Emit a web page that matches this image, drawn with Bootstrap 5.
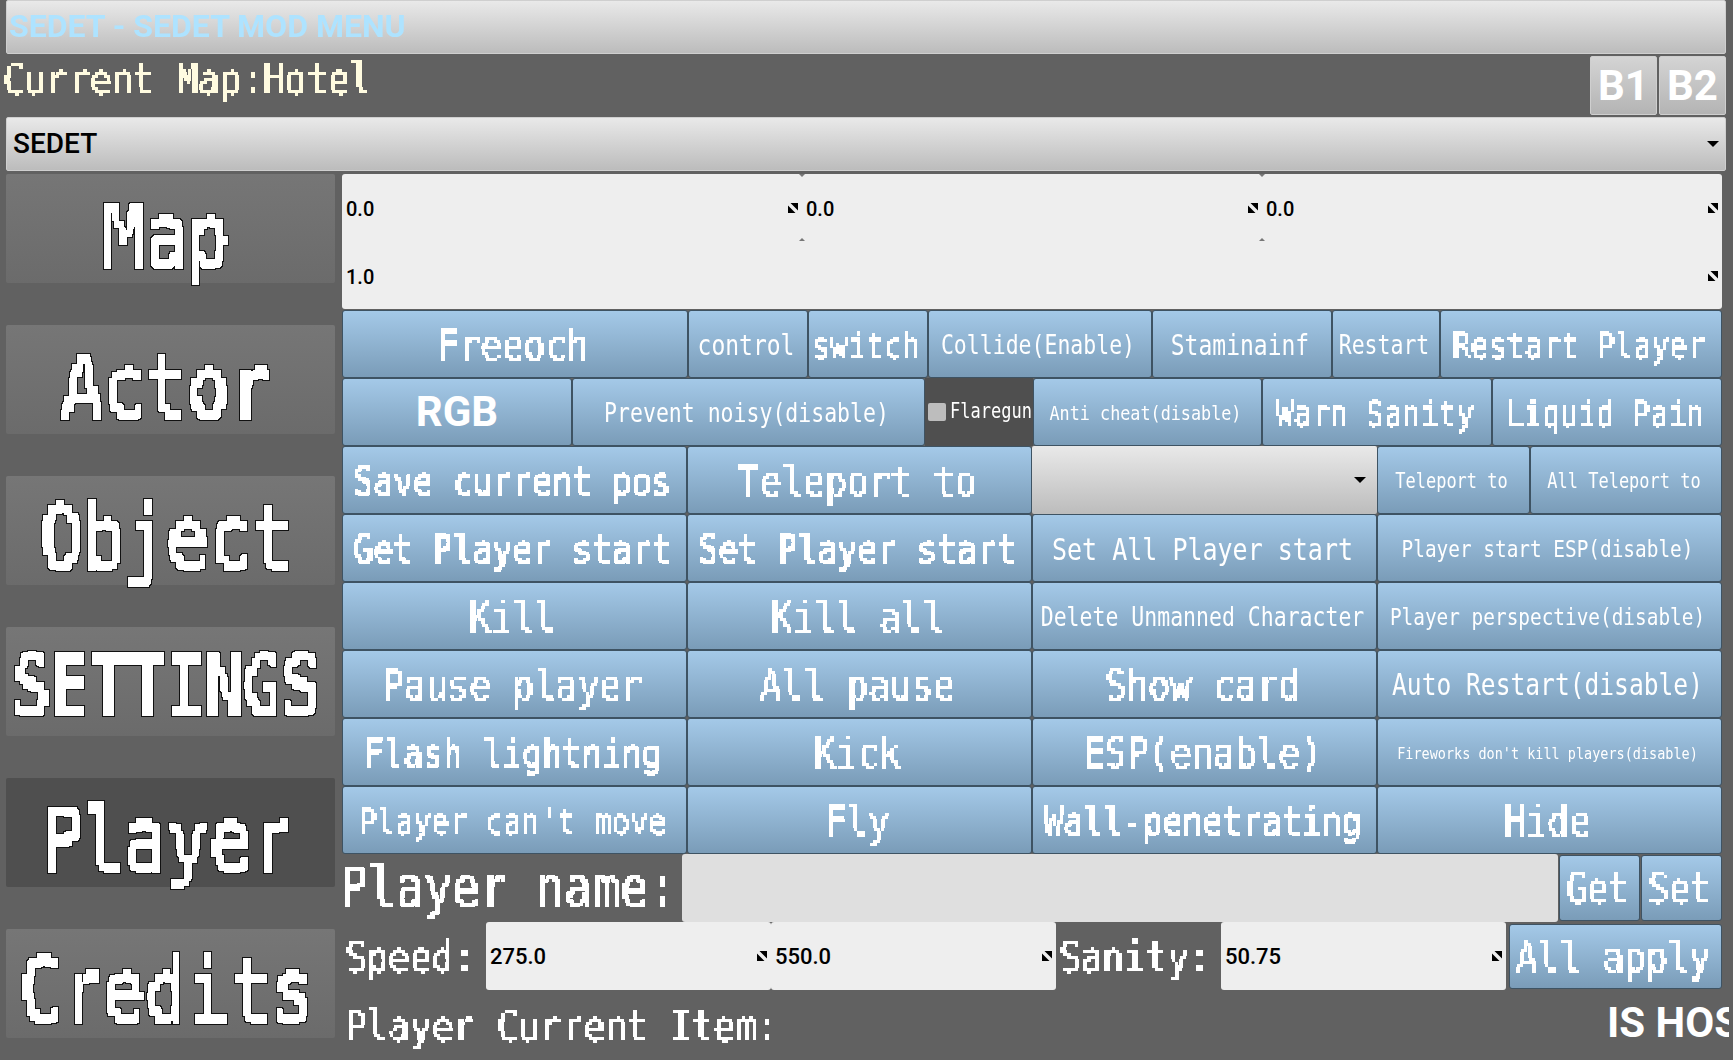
<!DOCTYPE html>
<html lang="en">
<head>
<meta charset="utf-8">
<title>SEDET MOD MENU</title>
<link href="https://cdn.jsdelivr.net/npm/bootstrap@5.3.0/dist/css/bootstrap.min.css" rel="stylesheet">
<style>
html,body{height:1060px;overflow:hidden}
body{background:#616161;color:#fff;font-family:Roboto,"Liberation Sans",sans-serif}
.shell{width:1733px;height:1060px;overflow:hidden;padding:0 7px 0 6px}
.metal{background:linear-gradient(#e9e9e9,#bcbcbc);border:1px solid #cfcfcf;border-radius:2px}
.titlebar{height:54px;padding-left:2px;font-size:32px;font-weight:700;line-height:50px;color:#aee3ff}
.titlebar span{filter:blur(.7px)}
.maprow{height:63px;margin-left:-3px}
.mapname{color:#fffbe0}
.hbtn{width:67px;height:59px;margin-top:2px;margin-left:2px;background:linear-gradient(#d4d4d4,#b4b4b4);border:1px solid #cfcfcf;border-radius:2px;color:#fff;font-size:42px;font-weight:700;line-height:1;padding:0}
.selbar{height:54px;padding:0 6px;font-size:28px;font-weight:500;color:#000}
.caret-mark{width:0;height:0;border-left:6px solid transparent;border-right:6px solid transparent;border-top:6px solid #000}
.mainrow{margin-top:3px}
.tabcol{width:329px;gap:42px}
.tabitem{height:109px;background:linear-gradient(#767676,#6b6b6b);border:0;border-radius:2px;color:#fff;padding:10px 8px 0 0}
.tabitem.on{background:#4f4f4f}
.rightcol{width:1380px;margin-left:7px}
.panel{height:135px;background:#eee;border-radius:3px;position:relative;color:#000;font-weight:500;font-size:20px}
.cellv{padding:2px 0 0 4px;height:68px;position:relative}
.cellh{width:460px}
.grip{position:absolute;right:4px;width:10px;height:10px;top:29px}
.tip{position:absolute;width:0;height:0;border-left:3px solid transparent;border-right:3px solid transparent}
.tip-t{border-top:3px solid #777;top:0}
.tip-b{border-bottom:3px solid #777;top:64px}
.tip-pos{left:-3px}
.btnset{margin-top:1px}
.rowx{display:grid;height:68px;gap:0}
.r4{grid-template-columns:repeat(4,1fr)}
.r1{grid-template-columns:346px 120px 120px 224px 180px 108px 282px}
.r2{grid-template-columns:230px 353px 108px 229px 230px 230px}
.r3{grid-template-columns:345px 345px 345px 153px 192px}
.act{display:flex;align-items:center;justify-content:center;background:linear-gradient(#a4c9e8,#7a9cb8);border:1px solid #3e5363;border-radius:3px;color:#fff;padding:3px 4px 0 0;white-space:nowrap;overflow:hidden;min-width:0;line-height:1;--bs-btn-hover-color:#fff}
.rgbtxt{font-family:Roboto,sans-serif;font-weight:700;font-size:42px;padding:0}
.check{background:#4f4f4f;white-space:nowrap;overflow:hidden;padding-left:3px}
.box{width:18px;height:18px;background:#bdbdbd;border-radius:2px;flex:none}
.dropx{background:linear-gradient(#e9e9e9,#bcbcbc);border-radius:2px;padding-right:11px}
.px{display:inline-block;font-family:"DejaVu Sans Mono","Liberation Mono",monospace;transform:scaleY(1.2);white-space:pre}
.blk3{filter:url(#pix3)}
.blk4{filter:url(#pix4)}
.blk5{filter:url(#pix5)}
.tabitem .px{transform:scaleY(1.25);filter:url(#pix8)}
.nm{height:68px}
.nmlabel{width:342px;margin-left:-2px}
.nmfield{width:876px;background:#dfdfdf;border-radius:3px}
.nmbtn{flex:1 1 0;height:66px;margin-left:1px}
.spd{height:68px}
.lab{padding-left:3px;padding-top:3px;white-space:nowrap}
.spdfield{width:285px;height:68px;background:#eee;border-radius:3px;color:#000;font-weight:500;font-size:22px;padding-left:4px;position:relative}
.lab-s{width:144px}
.lab-t{width:165px;padding-left:3px}
.allb{width:213px;height:65px}
.grip2{position:absolute;right:4px;top:29px;width:10px;height:10px}
.itemrow{height:70px}
.hosttxt{font-size:42px;font-weight:700;white-space:nowrap;margin-left:auto;margin-bottom:6px;width:122px;overflow:hidden;margin-right:-7px}
.mapname .px{margin-top:-5px}
.f13{font-size:13.5px}.f16{font-size:16.8px}.f17{font-size:17px}.f19{font-size:19.4px}.f21{font-size:21.5px}.f23{font-size:23px}.f24{font-size:24.6px}.f25{font-size:25px}.f30{font-size:30px}.f33{font-size:33px}.f35{font-size:35px}.f36{font-size:36px}.f46{font-size:46.5px}.f64{font-size:64px}.f70{font-size:70px}
</style>
</head>
<body>
<svg width="0" height="0" class="position-absolute"><defs>
<symbol id="grip" viewBox="0 0 10 10"><path d="M0 2.5V10H7.5Z M2.5 0H10V7.5Z" fill="#000"/></symbol>
<filter id="pix8" x="-5%" y="-5%" width="110%" height="110%" color-interpolation-filters="sRGB">
  <feFlood x="2" y="2" width="4" height="3" flood-color="#fff"/>
  <feComposite width="8" height="7"/>
  <feTile result="grid"/>
  <feComposite in="SourceGraphic" in2="grid" operator="in"/>
  <feComponentTransfer><feFuncA type="discrete" tableValues="0 0 0 1 1 1 1 1 1 1"/></feComponentTransfer>
  <feMorphology operator="dilate" radius="2 2" result="solid"/>
  <feMorphology in="solid" operator="dilate" radius="1" result="fat"/>
  <feFlood flood-color="#111" result="ink"/>
  <feComposite in="ink" in2="fat" operator="in" result="edge"/>
  <feMerge><feMergeNode in="edge"/><feMergeNode in="solid"/></feMerge>
</filter>
<filter id="pix5" x="-5%" y="-5%" width="110%" height="110%" color-interpolation-filters="sRGB">
  <feFlood x="1" y="1" width="3" height="2" flood-color="#fff"/>
  <feComposite width="5" height="4"/>
  <feTile result="grid"/>
  <feComposite in="SourceGraphic" in2="grid" operator="in"/>
  <feComponentTransfer><feFuncA type="discrete" tableValues="0 0 0 1 1 1 1 1 1 1"/></feComponentTransfer>
  <feMorphology operator="dilate" radius="1 1"/>
</filter>
<filter id="pix4" x="-5%" y="-5%" width="110%" height="110%" color-interpolation-filters="sRGB">
  <feFlood x="1" y="1" width="2" height="1" flood-color="#fff"/>
  <feComposite width="4" height="3"/>
  <feTile result="grid"/>
  <feComposite in="SourceGraphic" in2="grid" operator="in"/>
  <feComponentTransfer><feFuncA type="discrete" tableValues="0 0 0 1 1 1 1 1 1 1"/></feComponentTransfer>
  <feMorphology operator="dilate" radius="1 1"/>
</filter>
<filter id="pix3" x="-5%" y="-5%" width="110%" height="110%" color-interpolation-filters="sRGB">
  <feFlood x="1" y="1" width="1" height="1" flood-color="#fff"/>
  <feComposite width="3" height="3"/>
  <feTile result="grid"/>
  <feComposite in="SourceGraphic" in2="grid" operator="in"/>
  <feComponentTransfer><feFuncA type="discrete" tableValues="0 0 0 1 1 1 1 1 1 1"/></feComponentTransfer>
  <feMorphology operator="dilate" radius="1 1"/>
</filter>
</defs></svg>
<div class="shell">
  <div class="titlebar metal"><span>SEDET - SEDET MOD MENU</span></div>
  <div class="maprow d-flex justify-content-between">
    <div class="mapname f36 d-flex align-items-start pt-1"><span class="px blk4">Current Map:Hotel</span></div>
    <div class="d-flex">
      <button class="btn hbtn">B1</button>
      <button class="btn hbtn">B2</button>
    </div>
  </div>
  <div class="selbar metal d-flex align-items-center justify-content-between"><span>SEDET</span><span class="caret-mark"></span></div>
  <div class="mainrow d-flex">
    <div class="tabcol d-flex flex-column">
      <button class="btn tabitem f70"><span class="px">Map</span></button>
      <button class="btn tabitem f70"><span class="px">Actor</span></button>
      <button class="btn tabitem f70"><span class="px">Object</span></button>
      <button class="btn tabitem f64"><span class="px">SETTINGS</span></button>
      <button class="btn tabitem on f70"><span class="px">Player</span></button>
      <button class="btn tabitem f70"><span class="px">Credits</span></button>
    </div>
    <div class="rightcol d-flex flex-column">
      <div class="panel">
        <div class="d-flex">
          <div class="cellv cellh d-flex align-items-center"><span>0.0</span><svg class="grip"><use href="#grip"/></svg></div>
          <div class="cellv cellh d-flex align-items-center"><span>0.0</span><svg class="grip"><use href="#grip"/></svg><i class="tip tip-t tip-pos"></i><i class="tip tip-b tip-pos"></i></div>
          <div class="cellv cellh d-flex align-items-center"><span>0.0</span><svg class="grip"><use href="#grip"/></svg><i class="tip tip-t tip-pos"></i><i class="tip tip-b tip-pos"></i></div>
        </div>
        <div class="cellv d-flex align-items-center"><span>1.0</span><svg class="grip"><use href="#grip"/></svg></div>
      </div>
      <div class="btnset">
        <div class="rowx r1">
          <button class="btn act f36"><span class="px blk4">Freeoch</span></button>
          <button class="btn act f23"><span class="px">control</span></button>
          <button class="btn act f30"><span class="px blk3">switch</span></button>
          <button class="btn act f21"><span class="px">Collide(Enable)</span></button>
          <button class="btn act f23"><span class="px">Staminainf</span></button>
          <button class="btn act f21"><span class="px">Restart</span></button>
          <button class="btn act f30"><span class="px blk3">Restart Player</span></button>
        </div>
        <div class="rowx r2">
          <button class="btn act rgbtxt">RGB</button>
          <button class="btn act f21"><span class="px">Prevent noisy(disable)</span></button>
          <div class="check d-flex align-items-center gap-1 f17"><span class="box"></span><span class="px">Flaregun</span></div>
          <button class="btn act f16"><span class="px">Anti cheat(disable)</span></button>
          <button class="btn act f30"><span class="px blk3">Warn Sanity</span></button>
          <button class="btn act f30"><span class="px blk3">Liquid Pain</span></button>
        </div>
        <div class="rowx r3">
          <button class="btn act f33"><span class="px blk4">Save current pos</span></button>
          <button class="btn act f36"><span class="px blk4">Teleport to</span></button>
          <div class="dropx d-flex align-items-center justify-content-end"><span class="caret-mark"></span></div>
          <button class="btn act f17"><span class="px">Teleport to</span></button>
          <button class="btn act f17"><span class="px">All Teleport to</span></button>
        </div>
        <div class="rowx r4">
          <button class="btn act f33"><span class="px blk4">Get Player start</span></button>
          <button class="btn act f33"><span class="px blk4">Set Player start</span></button>
          <button class="btn act f25"><span class="px">Set All Player start</span></button>
          <button class="btn act f19"><span class="px">Player start ESP(disable)</span></button>
        </div>
        <div class="rowx r4">
          <button class="btn act f36"><span class="px blk4">Kill</span></button>
          <button class="btn act f36"><span class="px blk4">Kill all</span></button>
          <button class="btn act f21"><span class="px">Delete Unmanned Character</span></button>
          <button class="btn act f19"><span class="px">Player perspective(disable)</span></button>
        </div>
        <div class="rowx r4">
          <button class="btn act f36"><span class="px blk4">Pause player</span></button>
          <button class="btn act f36"><span class="px blk4">All pause</span></button>
          <button class="btn act f36"><span class="px blk4">Show card</span></button>
          <button class="btn act f24"><span class="px">Auto Restart(disable)</span></button>
        </div>
        <div class="rowx r4">
          <button class="btn act f33"><span class="px blk4">Flash lightning</span></button>
          <button class="btn act f36"><span class="px blk4">Kick</span></button>
          <button class="btn act f36"><span class="px blk4">ESP(enable)</span></button>
          <button class="btn act f13"><span class="px">Fireworks don't kill players(disable)</span></button>
        </div>
        <div class="rowx r4">
          <button class="btn act f30"><span class="px blk3">Player can't move</span></button>
          <button class="btn act f36"><span class="px blk4">Fly</span></button>
          <button class="btn act f33"><span class="px blk4">Wall-penetrating</span></button>
          <button class="btn act f36"><span class="px blk4">Hide</span></button>
        </div>
      </div>
      <div class="nm d-flex align-items-center">
        <div class="nmlabel f46"><span class="px blk5">Player name:</span></div>
        <div class="nmfield align-self-stretch"></div>
        <button class="btn act nmbtn f35"><span class="px blk4">Get</span></button>
        <button class="btn act nmbtn f35"><span class="px blk4">Set</span></button>
      </div>
      <div class="spd d-flex align-items-center">
        <div class="lab f36 lab-s"><span class="px blk4">Speed:</span></div>
        <div class="spdfield d-flex align-items-center">275.0<svg class="grip2"><use href="#grip"/></svg></div>
        <div class="spdfield d-flex align-items-center">550.0<svg class="grip2"><use href="#grip"/></svg></div>
        <div class="lab f36 lab-t"><span class="px blk4">Sanity:</span></div>
        <div class="spdfield d-flex align-items-center">50.75<svg class="grip2"><use href="#grip"/></svg></div>
        <button class="btn act allb f36 ms-auto"><span class="px blk4">All apply</span></button>
      </div>
      <div class="itemrow d-flex align-items-center">
        <div class="lab f36"><span class="px blk4">Player Current Item:</span></div>
        <div class="hosttxt">IS HOST</div>
      </div>
    </div>
  </div>
</div>
<script src="https://cdn.jsdelivr.net/npm/bootstrap@5.3.0/dist/js/bootstrap.bundle.min.js"></script>
</body>
</html>
